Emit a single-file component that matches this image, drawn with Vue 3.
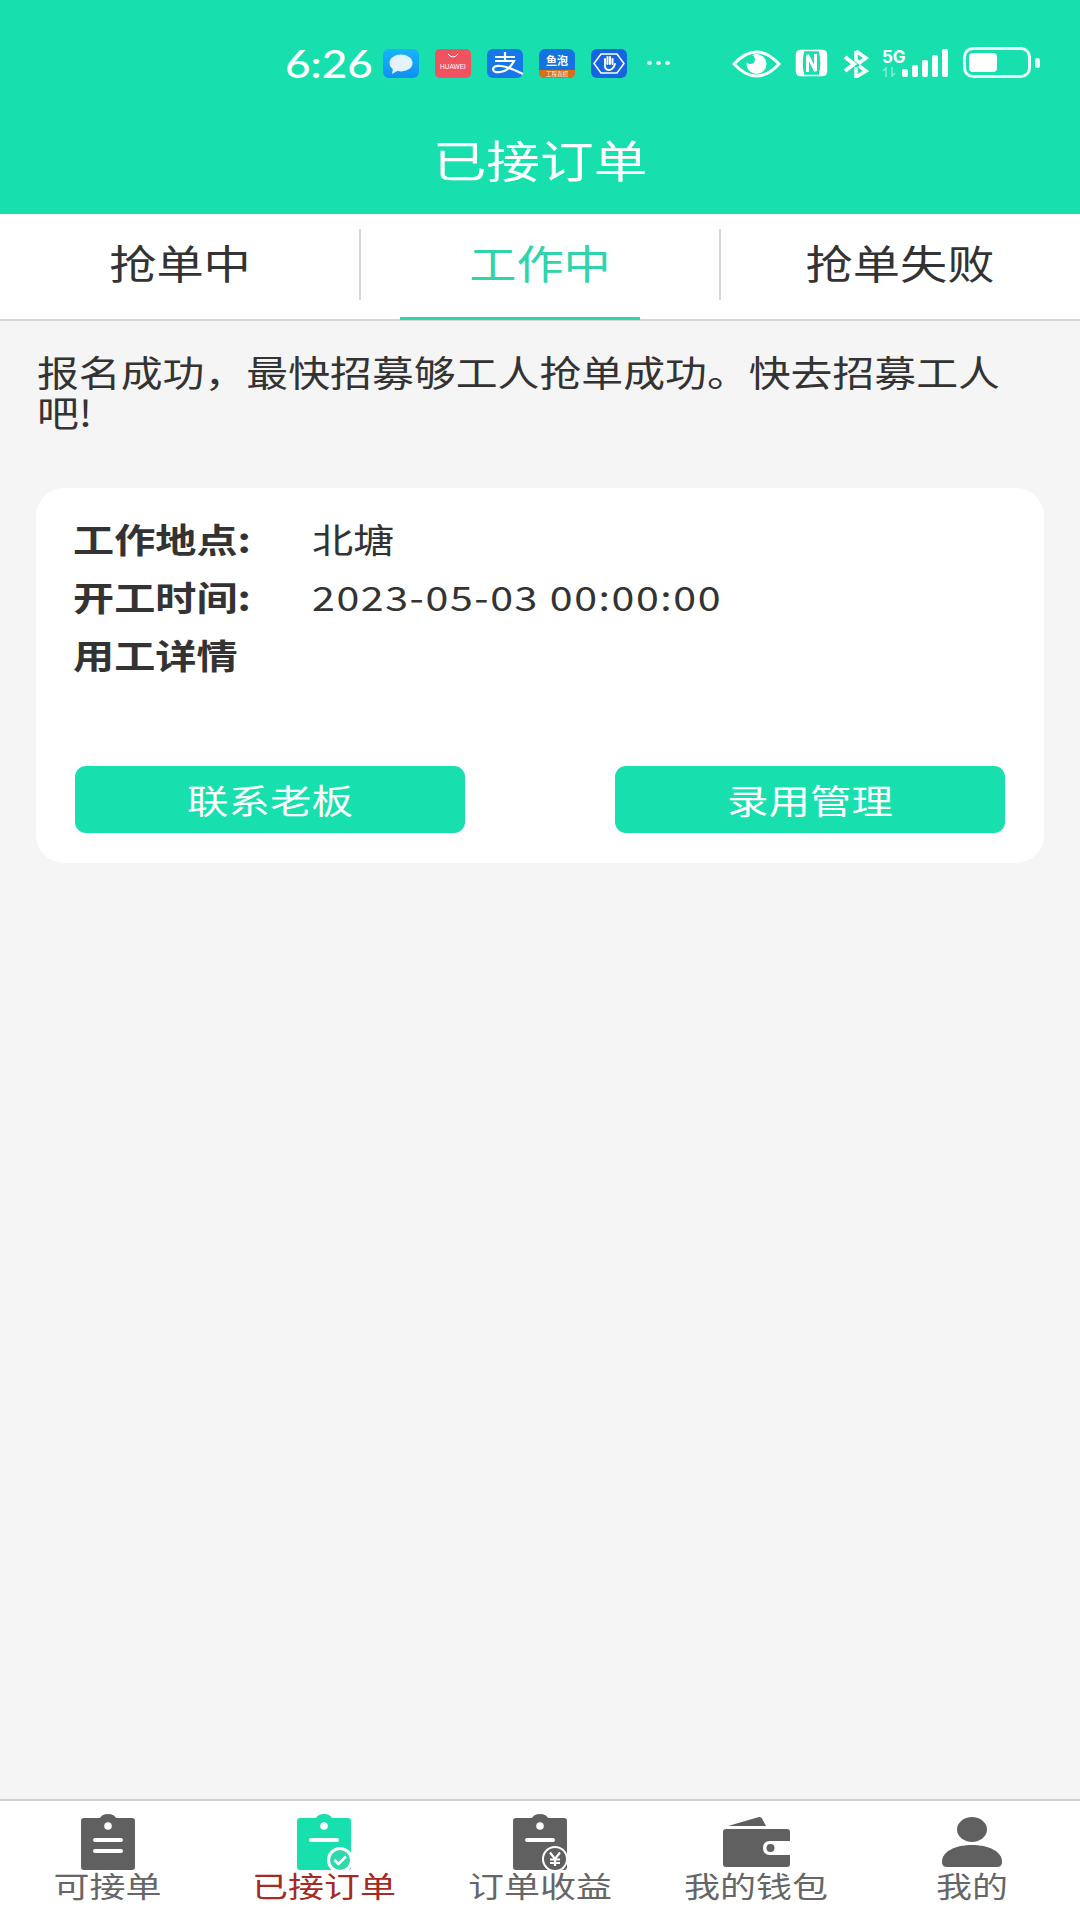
<template>
  <div class="page">
    <header class="top">
      <div class="status">
        <span class="time">6:26</span>
        <div class="apps">
          <svg class="app" viewBox="0 0 36 29">
            <defs>
              <linearGradient id="msg" x1="0" y1="0" x2="0" y2="1">
                <stop offset="0" stop-color="#19b4fb" />
                <stop offset="1" stop-color="#0f8ff2" />
              </linearGradient>
            </defs>
            <rect width="36" height="29" rx="6" fill="url(#msg)" />
            <ellipse cx="18" cy="14" rx="11.5" ry="8.5" fill="#e2f3fd" />
            <path d="M10 19 L9 25 L16 21 Z" fill="#e2f3fd" />
          </svg>
          <svg class="app" viewBox="0 0 36 29">
            <rect width="36" height="29" rx="5" fill="#f1525f" />
            <path d="M13 5 Q18 11 23 5" fill="none" stroke="#fff" stroke-width="1" />
            <text x="18" y="20" text-anchor="middle" class="huawei">HUAWEI</text>
          </svg>
          <svg class="app" viewBox="0 0 36 29">
            <rect width="36" height="29" rx="6" fill="#1677e8" />
            <path d="M8 8 H28 M18 3 V12 M8 12 H27 Q22 22 13 23 Q6 24 6 20 Q7 16 14 17 Q22 18 36 25" fill="none" stroke="#fff" stroke-width="2.200" />
          </svg>
          <svg class="app" viewBox="0 0 36 29">
            <rect width="36" height="29" rx="6" fill="#1473e0" />
            <path d="M0 21 H36 V23 Q36 29 30 29 H6 Q0 29 0 23 Z" fill="#d8701a" />
            <text x="18" y="16" text-anchor="middle" class="yupao">鱼泡</text>
            <text x="18" y="27" text-anchor="middle" class="yupao-sub">工程直招</text>
          </svg>
          <svg class="app" viewBox="0 0 36 29">
            <rect width="36" height="29" rx="6" fill="#1764e0" />
            <path d="M10 5 H26 L33 14.500 L26 24 H10 L3 14.500 Z" fill="none" stroke="#fff" stroke-width="1.500" />
            <path d="M14 15 V10 M16.500 15 V8 M19 15 V8 M21.500 15 V10 M14 14 Q13 21 18 21 Q22 21 24 15" fill="none" stroke="#fff" stroke-width="2" stroke-linecap="round" />
          </svg>
        </div>
        <div class="dots"><i></i><i></i><i></i></div>
        <div class="sys">
          <svg class="eye" viewBox="0 0 49 28">
            <path d="M2 14 Q13 2 24.500 2 Q36 2 47 14 Q36 26 24.500 26 Q13 26 2 14 Z" fill="none" stroke="#fff" stroke-width="3" />
            <circle cx="24.500" cy="14" r="10" fill="#fff" />
            <circle cx="18.500" cy="9.500" r="4.500" fill="#17dfad" />
          </svg>
          <svg class="nfc" viewBox="0 0 33 28">
            <path d="M8 2 H6 Q2 2 2 6 V22 Q2 26 6 26 H8 Q5 14 8 2 Z" fill="#fff" stroke="#fff" stroke-width="2.500" />
            <path d="M25 2 H27 Q31 2 31 6 V22 Q31 26 27 26 H25 Q28 14 25 2 Z" fill="#fff" stroke="#fff" stroke-width="2.500" />
            <path d="M8 1.500 H25 M8 26.500 H25" fill="none" stroke="#fff" stroke-width="1.500" />
            <path d="M12.500 23 V6 L20.500 22 V5" fill="none" stroke="#fff" stroke-width="3" />
          </svg>
          <svg class="bt" viewBox="0 0 26 28">
            <path d="M2 7 L11 14 L2 21" fill="none" stroke="#fff" stroke-width="4" />
            <path d="M13 1 L23 8 L16 13 M16 16 L23 21 L13 27 V17" fill="none" stroke="#fff" stroke-width="3.500" />
            <path d="M13 1 V10 L18 14" fill="none" stroke="#fff" stroke-width="3.500" />
          </svg>
          <div class="net">
            <span class="fiveg">5G</span>
            <svg class="arrows" viewBox="0 0 14 10">
              <path d="M4 10 V1 L1 4 M10 0 V9 L13 6" fill="none" stroke="#7debcf" stroke-width="1.600" />
            </svg>
          </div>
          <div class="bars">
            <i v-for="h in signal" :key="h" :style="{ height: h + 'px' }"></i>
          </div>
          <div class="battery"><div class="level"></div></div>
          <div class="nub"></div>
        </div>
      </div>
      <h1 class="title"><span class="wide">已接订单</span></h1>
    </header>

    <nav class="tabs">
      <div v-for="t in tabs" :key="t.name" class="tab" :class="{ on: t.on }">
        <span class="wide">{{ t.name }}</span>
      </div>
    </nav>

    <main class="content">
      <p class="notice">报名成功&#xFF0C;最快招募够工人抢单成功。快去招募工人吧!</p>
      <section class="card">
        <div class="row"><span class="label">工作地点:</span><span class="value">北塘</span></div>
        <div class="row"><span class="label">开工时间:</span><span class="value date">2023-05-03 00:00:00</span></div>
        <div class="row"><span class="label">用工详情</span></div>
        <div class="actions">
          <button class="btn"><span class="wide">联系老板</span></button>
          <button class="btn"><span class="wide">录用管理</span></button>
        </div>
      </section>
    </main>

    <footer class="nav">
      <div class="nav-item">
        <svg class="nav-icon" width="54" height="56" viewBox="0 0 54 56">
          <path d="M3 4 H19 Q21 0 27 0 Q33 0 35 4 H51 Q54 4 54 7 V53 Q54 56 51 56 H3 Q0 56 0 53 V7 Q0 4 3 4 Z" fill="#606060" />
          <circle cx="27" cy="12" r="3.800" fill="#fff" />
          <rect x="12" y="24" width="30" height="4" rx="2" fill="#fff" />
          <rect x="12" y="35" width="30" height="4" rx="2" fill="#fff" />
        </svg>
        <span class="nav-label"><span class="wide">可接单</span></span>
      </div>
      <div class="nav-item active">
        <svg class="nav-icon" width="54" height="56" viewBox="0 0 54 56">
          <path d="M3 4 H19 Q21 0 27 0 Q33 0 35 4 H51 Q54 4 54 7 V53 Q54 56 51 56 H3 Q0 56 0 53 V7 Q0 4 3 4 Z" fill="#17dfad" />
          <circle cx="27" cy="12" r="3.800" fill="#fff" />
          <rect x="12" y="24" width="30" height="4" rx="2" fill="#fff" />
          <circle cx="43" cy="46" r="13" fill="#fff" />
          <circle cx="43" cy="46" r="10" fill="#2fd8ae" />
          <path d="M37.500 46 L41.500 50 L49 42.500" fill="none" stroke="#fff" stroke-width="2.600" />
        </svg>
        <span class="nav-label"><span class="wide">已接订单</span></span>
      </div>
      <div class="nav-item">
        <svg class="nav-icon" width="54" height="56" viewBox="0 0 54 56">
          <path d="M3 4 H19 Q21 0 27 0 Q33 0 35 4 H51 Q54 4 54 7 V53 Q54 56 51 56 H3 Q0 56 0 53 V7 Q0 4 3 4 Z" fill="#606060" />
          <circle cx="27" cy="12" r="3.800" fill="#fff" />
          <rect x="12" y="24" width="30" height="4" rx="2" fill="#fff" />
          <circle cx="42" cy="45" r="13" fill="#fff" />
          <circle cx="42" cy="45" r="11" fill="#606060" />
          <path d="M37 38.500 L42 45 L47 38.500 M42 45 V52 M37 45.500 H47 M37 49 H47" fill="none" stroke="#fff" stroke-width="2.200" />
        </svg>
        <span class="nav-label"><span class="wide">订单收益</span></span>
      </div>
      <div class="nav-item">
        <svg class="nav-icon" width="67" height="56" viewBox="0 0 67 56">
          <path d="M5 12 L36 3 Q38 2.500 39 4.500 L43 12 Z" fill="#606060" />
          <path d="M3 15 H64 Q67 15 67 18 V27 H47 Q40 27 40 34 Q40 41 47 41 H67 V50 Q67 53 64 53 H3 Q0 53 0 50 V18 Q0 15 3 15 Z" fill="#606060" />
          <circle cx="47.500" cy="34" r="4" fill="#606060" />
        </svg>
        <span class="nav-label"><span class="wide">我的钱包</span></span>
      </div>
      <div class="nav-item">
        <svg class="nav-icon" width="60" height="56" viewBox="0 0 60 56">
          <ellipse cx="30" cy="15.500" rx="15" ry="12.500" fill="#606060" />
          <path d="M0 48 C0 37 14 31 30 31 C46 31 60 37 60 48 Q60 53 55 53 H5 Q0 53 0 48 Z" fill="#606060" />
        </svg>
        <span class="nav-label"><span class="wide">我的</span></span>
      </div>
    </footer>
  </div>
</template>

<script setup>
const tabs = [
  { name: '抢单中' },
  { name: '工作中', on: true },
  { name: '抢单失败' }
]
const signal = [8, 12, 17, 22, 28]
</script>

<style>
html,
body {
  margin: 0;
  background: #f5f5f5;
}
</style>

<style scoped>
.page {
  width: 1080px;
  height: 1920px;
  display: flex;
  flex-direction: column;
  overflow: hidden;
  background: #f5f5f5;
  font-family: "Noto Sans CJK SC", "Noto Sans", sans-serif;
}

/* the reference type is stretched sideways */
.wide {
  display: inline-block;
  transform: scaleX(1.2);
}

.top {
  height: 214px;
  background: #17dfad;
  color: #fff;
  display: flex;
  flex-direction: column;
}

.status {
  height: 106px;
  box-sizing: border-box;
  padding: 47px 0 0 285px;
  display: flex;
  align-items: flex-start;
}

.time {
  width: 98px;
  height: 32px;
  line-height: 32px;
  font-family: "Lato", "Open Sans", sans-serif;
  font-size: 39px;
  font-weight: 500;
  transform: scaleX(1.13);
  transform-origin: left;
}

.apps {
  display: flex;
  gap: 16px;
  margin-top: 2px;
}

.app {
  width: 36px;
  height: 29px;
  display: block;
}

.huawei {
  font-family: "Liberation Sans", sans-serif;
  font-size: 6.500px;
  fill: #fff;
}

.yupao {
  font-family: "Noto Sans CJK SC", sans-serif;
  font-size: 11px;
  font-weight: 700;
  fill: #fff;
}

.yupao-sub {
  font-family: "Noto Sans CJK SC", sans-serif;
  font-size: 5.500px;
  fill: #fff;
}

.dots {
  display: flex;
  gap: 4px;
  margin: 14px 0 0 20px;
}

.dots i {
  width: 5px;
  height: 4px;
  border-radius: 50%;
  background: #e4fbf5;
}

.sys {
  display: flex;
  align-items: flex-start;
  margin-left: 62px;
}

.eye {
  width: 49px;
  height: 28px;
  margin-top: 3px;
}

.nfc {
  width: 33px;
  height: 28px;
  margin: 2px 0 0 14px;
}

.bt {
  width: 26px;
  height: 28px;
  margin: 3px 0 0 15px;
}

.net {
  width: 24px;
  margin-left: 13px;
  display: flex;
  flex-direction: column;
  align-items: flex-start;
}

.fiveg {
  font-family: "Inter", "Noto Sans", sans-serif;
  font-size: 17px;
  font-weight: 700;
  line-height: 16px;
  margin-top: 2px;
}

.arrows {
  width: 14px;
  height: 10px;
  margin-top: 2px;
}

.bars {
  display: flex;
  align-items: flex-end;
  gap: 4px;
  height: 28px;
  margin: 2px 0 0 -4px;
}

.bars i {
  width: 6px;
  border-radius: 2px;
  background: #fff;
}

.battery {
  width: 68px;
  height: 31px;
  box-sizing: border-box;
  margin-left: 15px;
  border: 3px solid #e8fbf6;
  border-radius: 10px;
  padding: 3px;
}

.level {
  width: 28px;
  height: 100%;
  border-radius: 4px;
  background: #fff;
}

.nub {
  width: 5px;
  height: 10px;
  margin: 11px 0 0 4px;
  border-radius: 2px;
  background: #e8fbf6;
}

.title {
  flex: 1;
  margin: 0;
  padding-bottom: 2px;
  display: flex;
  align-items: center;
  justify-content: center;
  font-size: 44px;
  font-weight: 400;
}

.title .wide {
  transform: scaleX(1.22);
}

.tabs {
  height: 107px;
  box-sizing: border-box;
  display: flex;
  background: #fff;
  border-bottom: 2px solid #d6d6d6;
}

.tab {
  flex: 1;
  position: relative;
  display: flex;
  align-items: center;
  justify-content: center;
  padding-bottom: 10px;
  font-size: 40px;
  color: #333;
}

.tab .wide {
  transform: scaleX(1.18);
}

.tab + .tab::before {
  content: "";
  position: absolute;
  left: -1px;
  top: 15px;
  width: 2px;
  height: 71px;
  background: #d6d6d6;
}

.tab.on {
  color: #2fd4ab;
}

.tab.on::after {
  content: "";
  position: absolute;
  left: 40px;
  bottom: -1px;
  width: 240px;
  height: 3px;
  background: #2fd4ab;
}

.content {
  flex: 1;
  padding: 30px 36px 0;
}

.notice {
  width: 840px;
  margin: 0 0 0 1px;
  font-size: 36px;
  line-height: 40px;
  color: #333;
  transform: scaleX(1.163);
  transform-origin: left;
}

.card {
  margin-top: 57px;
  height: 375px;
  box-sizing: border-box;
  padding: 21px 39px 0;
  display: flex;
  flex-direction: column;
  background: #fff;
  border-radius: 28px;
}

.row {
  display: flex;
  height: 58px;
  margin-left: -2px;
  align-items: center;
  font-size: 34px;
  color: #333;
}

.label,
.value {
  transform: scaleX(1.21);
  transform-origin: left;
}

.label {
  width: 239px;
  font-weight: 700;
}

.value.date {
  letter-spacing: 1.300px;
}

.actions {
  margin-top: auto;
  margin-bottom: 30px;
  display: flex;
  justify-content: space-between;
}

.btn {
  width: 390px;
  height: 67px;
  padding: 0;
  border: 0;
  border-radius: 11px;
  background: #17dfad;
  color: #fff;
  font-family: inherit;
  font-size: 34px;
}

.btn .wide {
  transform: scaleX(1.22);
}

.nav {
  height: 121px;
  box-sizing: border-box;
  display: grid;
  grid-template-columns: repeat(5, 1fr);
  background: #fff;
  border-top: 2px solid #d0d0d0;
}

.nav-item {
  position: relative;
  display: flex;
  flex-direction: column;
  align-items: center;
  padding-top: 13px;
}

.nav-icon {
  display: block;
}

.nav-label {
  font-size: 29px;
  line-height: 30px;
  color: #666;
}

.nav-label .wide {
  transform: scaleX(1.24);
}

.active .nav-label {
  color: #a52a22;
}
</style>
